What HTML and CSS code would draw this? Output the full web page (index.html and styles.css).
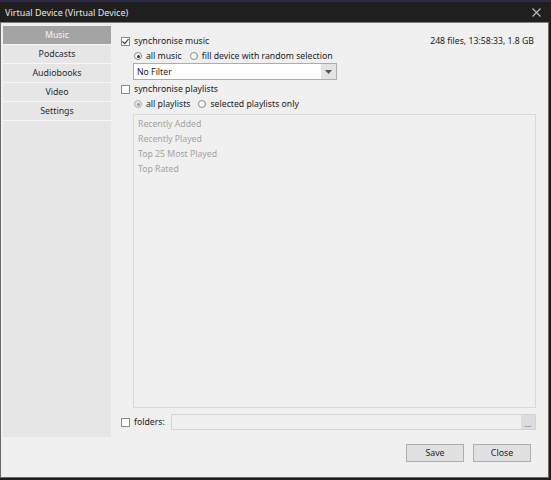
FILE: index.html
```html
<!DOCTYPE HTML>
<html lang="en">
  <head>
    <title>Virtual Device</title>
    <meta charset="utf-8">
    <link rel="stylesheet" href="styles.css">
  </head>
  <body>

  <div class="window">
    <div class="titlebar">
      <span class="title">Virtual Device (Virtual Device)</span>
      <svg class="close" width="9" height="9" viewBox="0 0 9 9">
        <path d="M0.5 0.5 L8.5 8.5 M8.5 0.5 L0.5 8.5" stroke="#bdbdbd" stroke-width="1.1" fill="none"/>
      </svg>
    </div>

    <div class="frame">
      <div class="content">
        <div class="sidebar">
          <div class="tab selected">Music</div>
          <div class="tab">Podcasts</div>
          <div class="tab">Audiobooks</div>
          <div class="tab">Video</div>
          <div class="tab">Settings</div>
        </div>

        <div class="main">
          <div class="row first">
            <label class="check"><span class="box"><svg width="7" height="7" viewBox="0 0 7 7"><path d="M0.5 3.5 L2.7 5.7 L6.5 1" stroke="#333" stroke-width="1.1" fill="none"/></svg></span>synchronise music</label>
            <span class="stats">248 files, 13:58:33, 1.8 GB</span>
          </div>
          <div class="radios">
            <label class="radio"><span class="dot on"></span>all music</label>
            <label class="radio"><span class="dot"></span>fill device with random selection</label>
          </div>
          <div class="select">
            <span>No Filter</span>
            <span class="arrow"><svg width="7" height="4" viewBox="0 0 7 4"><path d="M0 0 L7 0 L3.5 4 Z" fill="#555"/></svg></span>
          </div>

          <div class="row">
            <label class="check"><span class="box"></span>synchronise playlists</label>
          </div>
          <div class="radios">
            <label class="radio"><span class="dot on off"></span>all playlists</label>
            <label class="radio"><span class="dot"></span>selected playlists only</label>
          </div>
          <div class="list">
            <div class="item">Recently Added</div>
            <div class="item">Recently Played</div>
            <div class="item">Top 25 Most Played</div>
            <div class="item">Top Rated</div>
          </div>

          <div class="folders">
            <label class="check"><span class="box"></span>folders:</label>
            <div class="path"><span class="browse">...</span></div>
          </div>
        </div>
      </div>

      <div class="buttons">
        <button class="btn">Save</button>
        <button class="btn">Close</button>
      </div>
    </div>
  </div>

  </body>
</html>
```

FILE: styles.css
```css
html, body {
  margin: 0;
  padding: 0;
}
body {
  background: #1f1f1f;
  font-family: "Noto Sans", "Open Sans", sans-serif;
  font-size: 8.7px;
  color: #1a1a1a;
}
.window {
  width: 551px;
  height: 480px;
  display: flex;
  flex-direction: column;
  box-sizing: border-box;
  border-top: 2px solid #2d2b47;
  padding: 0 2px 2px 0;
}
.titlebar {
  height: 19px;
  display: flex;
  align-items: center;
  justify-content: space-between;
  background: #1f1f1f;
  color: #e6e6e6;
  padding: 1px 8px 0 5px;
  font-size: 9px;
}
.frame {
  flex: 1;
  display: flex;
  flex-direction: column;
  background: #f0f0f0;
  border: 1px solid #6a6a6a;
  border-top-color: #7e7e7e;
  padding: 3px 2px 0 2px;
}
.content {
  flex: 1;
  display: flex;
}
.sidebar {
  width: 108px;
  background: #e6e6e6;
}
.tab {
  height: 18px;
  line-height: 18px;
  text-align: center;
  border-bottom: 1px solid #f7f7f7;
  color: #2a2a2a;
  font-size: 8.8px;
}
.tab.selected {
  background: #a4a4a4;
  color: #f4f4f4;
}
.main {
  flex: 1;
  display: flex;
  flex-direction: column;
  padding: 7px 10px 7px 10px;
}
.row {
  display: flex;
  justify-content: space-between;
  align-items: center;
  height: 16px;
  margin-top: 1px;
}
.row.first {
  margin-top: 0;
}
.stats {
  padding-right: 2px;
}
.check, .radio {
  display: flex;
  align-items: center;
}
.box {
  width: 9px;
  height: 9px;
  box-sizing: border-box;
  border: 1px solid #8a8a8a;
  background: #fff;
  margin-right: 4px;
  display: flex;
  align-items: center;
  justify-content: center;
}
.radios {
  display: flex;
  gap: 8px;
  height: 14px;
  align-items: center;
  padding-left: 13px;
}
.dot {
  width: 8px;
  height: 8px;
  box-sizing: border-box;
  border: 1px solid #8a8a8a;
  border-radius: 50%;
  background: #fff;
  margin-right: 4px;
  position: relative;
}
.dot.on::after {
  content: "";
  position: absolute;
  left: 1.5px;
  top: 1.5px;
  width: 3px;
  height: 3px;
  border-radius: 50%;
  background: #333;
}
.dot.off {
  background: #e6e6e6;
  border-color: #b0b0b0;
}
.dot.off::after {
  background: #9a9a9a;
}
.select {
  margin-left: 12px;
  width: 204px;
  height: 17px;
  box-sizing: border-box;
  border: 1px solid #adadad;
  background: #fff;
  display: flex;
  align-items: center;
  justify-content: space-between;
  padding-left: 3px;
}
.arrow {
  width: 15px;
  height: 15px;
  background: #e3e3e3;
  display: flex;
  align-items: center;
  justify-content: center;
}
.list {
  flex: 1;
  margin: 3px 0 0 12px;
  border: 1px solid #d9d9d9;
  padding: 2px 4px;
  color: #a3a3a3;
}
.item {
  height: 15px;
  line-height: 15px;
}
.folders {
  display: flex;
  align-items: center;
  margin-top: 6px;
  height: 16px;
}
.path {
  flex: 1;
  height: 16px;
  box-sizing: border-box;
  margin-left: 6px;
  border: 1px solid #d4d4d4;
  display: flex;
  justify-content: flex-end;
}
.browse {
  width: 14px;
  background: #dcdcdc;
  color: #555;
  font-size: 8px;
  line-height: 17px;
  text-align: center;
}
.buttons {
  display: flex;
  justify-content: flex-end;
  gap: 9px;
  height: 40px;
  padding: 7px 15px 0 0;
  box-sizing: border-box;
}
.btn {
  width: 58px;
  height: 18px;
  font-family: "Noto Sans", "Open Sans", sans-serif;
  font-size: 8.8px;
  background: #e1e1e1;
  border: 1px solid #adadad;
  padding: 0;
  color: #1e1e1e;
}
```
